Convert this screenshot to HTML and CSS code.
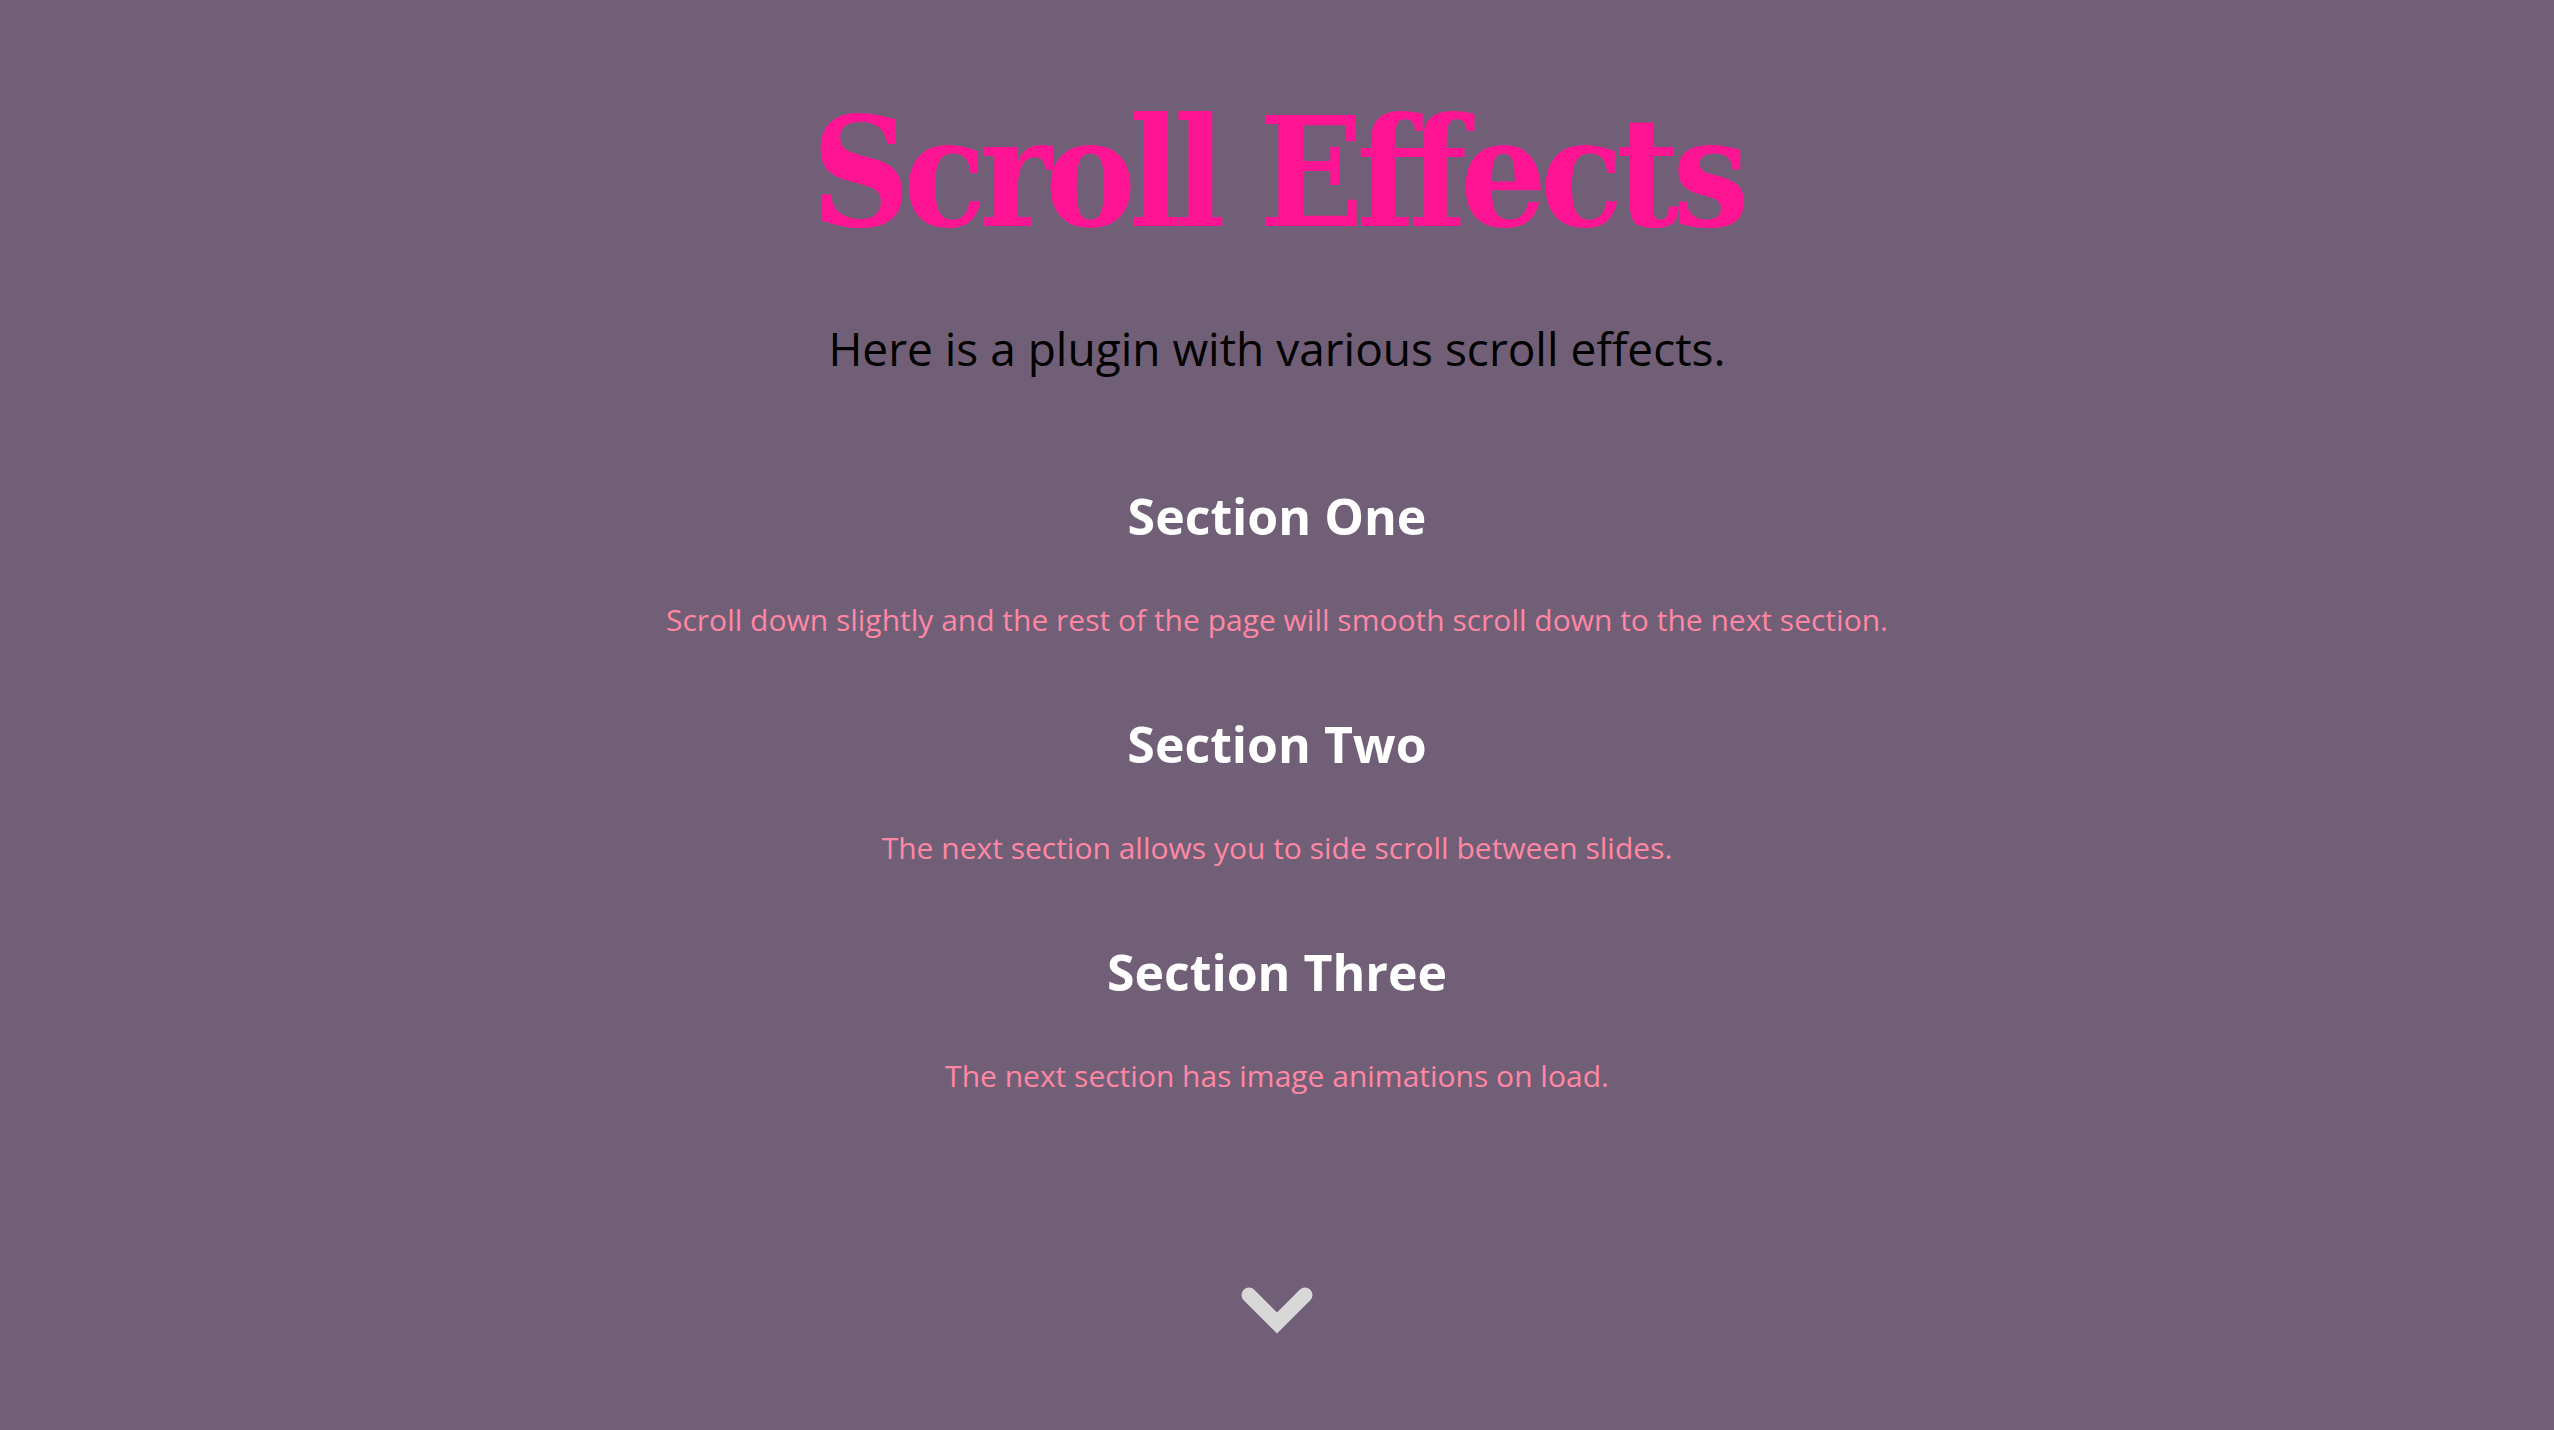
FILE: index.html
```html
<!DOCTYPE html>
<html>
<head>
<meta charset="utf-8">
<title>Scroll Effects</title>
<link rel="stylesheet" href="styles.css">
</head>
<body>
<main class="page">
  <h1 class="title">Scroll Effects</h1>
  <p class="lead">Here is a plugin with various scroll effects.</p>
  <section class="section">
    <h2 class="section-title">Section One</h2>
    <p class="section-text">Scroll down slightly and the rest of the page will smooth scroll down to the next section.</p>
  </section>
  <section class="section">
    <h2 class="section-title">Section Two</h2>
    <p class="section-text">The next section allows you to side scroll between slides.</p>
  </section>
  <section class="section">
    <h2 class="section-title">Section Three</h2>
    <p class="section-text">The next section has image animations on load.</p>
  </section>
  <div class="down">
    <svg class="chevron" width="76" height="50" viewBox="0 0 76 50" aria-hidden="true">
      <path d="M10 9 L38 37 L66 9" fill="none" stroke="#d8d8d8" stroke-width="15" stroke-linecap="round" stroke-linejoin="miter"/>
    </svg>
  </div>
</main>
</body>
</html>
```
FILE: styles.css
```css
html, body {
  margin: 0;
  padding: 0;
}
body {
  background: #705f76;
  font-family: "Open Sans", "Liberation Sans", sans-serif;
  min-height: 1430px;
}
.page {
  display: flex;
  flex-direction: column;
  align-items: center;
  text-align: center;
}
.title {
  margin: 93px 0 0;
  font-family: "DejaVu Serif Condensed", "DejaVu Serif", serif;
  font-stretch: condensed;
  font-weight: 700;
  font-size: 152px;
  line-height: 160px;
  letter-spacing: -7px;
  color: #ff1493;
}
.lead {
  margin: 65px 0 0;
  font-size: 46px;
  line-height: 60px;
  color: #000;
}
.section {
  display: flex;
  flex-direction: column;
  align-items: center;
}
.section:first-of-type {
  margin-top: 108px;
}
.section + .section {
  margin-top: 74px;
}
.section-title {
  margin: 0;
  font-size: 50px;
  line-height: 60px;
  font-weight: 700;
  color: #fff;
}
.section-text {
  margin: 54px 0 0;
  font-size: 30px;
  line-height: 40px;
  color: #ff87a4;
}
.down {
  margin-top: 190px;
  display: flex;
  justify-content: center;
}
.chevron {
  display: block;
}
```
